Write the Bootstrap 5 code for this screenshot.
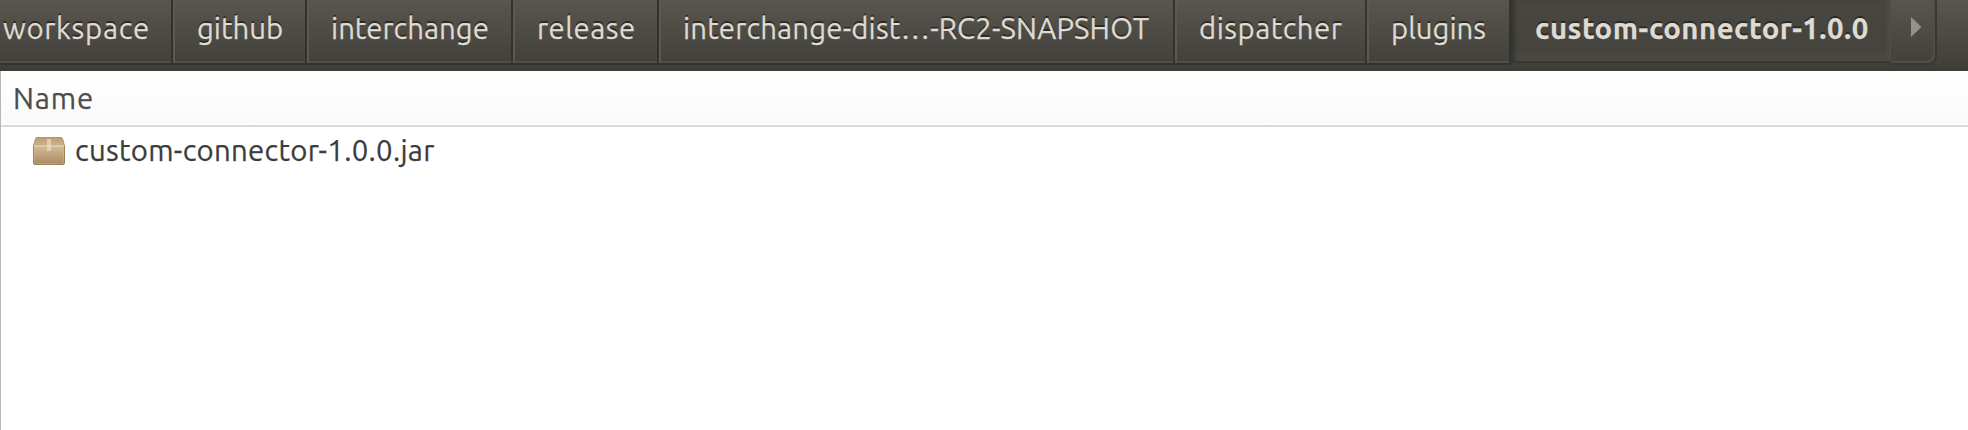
<!DOCTYPE html>
<html lang="en">
<head>
<meta charset="utf-8">
<title>custom-connector-1.0.0</title>
<link href="https://cdn.jsdelivr.net/npm/bootstrap@5.3.0/dist/css/bootstrap.min.css" rel="stylesheet">
<style>
body{font:29.33px/58px Ubuntu,"Noto Sans",sans-serif;color:#3c3c3c;background:#fff;overflow:hidden;-webkit-text-stroke:.25px}
.pathbar{height:71px;background:linear-gradient(#59564e 0,#43413c 61px,#3c3b37 71px);color:#dfdbd2;text-shadow:0 -2px 0 #2b2a27}
.crumb{height:65px;color:inherit;text-decoration:none;white-space:nowrap;padding-left:24px;border-right:2px solid #33322e;box-shadow:inset 0 -2px #33322e,inset 2px 0 #5b5953,inset 0 -4px #504e49}
.crumb:first-child{padding-left:3px;width:173px;letter-spacing:.7px;box-shadow:inset 0 -2px #33322e,inset 0 -4px #504e49}
.c-github{width:134px}
.c-inter{width:206px}
.c-release{width:146px;letter-spacing:.5px}
.c-dist{width:516px;letter-spacing:.16px}
.c-disp{width:192px;letter-spacing:.5px}
.c-plug{width:144px}
.c-current{width:380px;height:63px;padding-left:24px;font-weight:700;letter-spacing:.5px;background:linear-gradient(#484640,#45443e 50px,#4c4a45 61px);border-bottom:2px solid #383733;box-shadow:inset 6px 0 5px -3px #33322e,inset -5px 0 5px -2px #514f49;white-space:nowrap}
.c-next{width:46px;height:65px;border:solid #383733;border-width:0 2px 2px 0;border-radius:0 0 9px 0;box-shadow:inset -2px -2px #504e48}
.list-pane{height:359px;border-left:1px solid #b9b7b4}
.col-head{height:56px;line-height:56px;padding-left:12px;color:#4c4c4c;letter-spacing:.9px;background:linear-gradient(#fff,#fafafa 52px,#fff 54px);border-bottom:2px solid #dcd8d5}
.file-row{height:46px;line-height:46px;padding-left:32px;gap:10px;letter-spacing:.3px}
.file-row svg{margin-top:2px}
.file-row span{padding-top:2px}
</style>
<script src="https://cdn.jsdelivr.net/npm/bootstrap@5.3.0/dist/js/bootstrap.bundle.min.js"></script>
</head>
<body>
<nav class="pathbar d-flex align-items-start" aria-label="Location">
  <a class="crumb flex-shrink-0" href="#">workspace</a>
  <a class="crumb flex-shrink-0 c-github" href="#">github</a>
  <a class="crumb flex-shrink-0 c-inter" href="#">interchange</a>
  <a class="crumb flex-shrink-0 c-release" href="#">release</a>
  <a class="crumb flex-shrink-0 c-dist" href="#">interchange-dist…-RC2-SNAPSHOT</a>
  <a class="crumb flex-shrink-0 c-disp" href="#">dispatcher</a>
  <a class="crumb flex-shrink-0 c-plug" href="#">plugins</a>
  <span class="c-current flex-shrink-0" aria-current="page">custom-connector-1.0.0</span>
  <span class="c-next flex-shrink-0 d-flex"><svg width="44" height="56" aria-hidden="true"><path d="M20 17 30.500 27 20 37Z" fill="#96918b"/></svg></span>
</nav>
<main class="list-pane">
  <div class="col-head">Name</div>
  <div class="file-row d-flex align-items-center">
    <svg class="flex-shrink-0" width="32" height="28" viewBox="0 0 32 28" aria-hidden="true">
      <defs>
        <linearGradient id="front" x2="0" y2="1"><stop stop-color="#d5bc92"/><stop offset="1" stop-color="#a98a62"/></linearGradient>
        <linearGradient id="lid" x2="0" y2="1"><stop stop-color="#bd9f77"/><stop offset="1" stop-color="#cdb189"/></linearGradient>
      </defs>
      <path d="M4 .5h24q1 0 1.500 1L31.500 9H.5L2.500 1.500Q3 .5 4 .5Z" fill="url(#lid)" stroke="#b3936b"/>
      <path d="M.5 9h31v17q0 1.500-1.500 1.500H2Q.5 27.500.5 26Z" fill="url(#front)" stroke="#a08057"/>
      <path d="M1.500 10V25.500q0 1 1 1h27q1 0 1-1V10" fill="none" stroke="#d9c29b" stroke-opacity=".35"/>
      <path d="M1 9h30" stroke="#e9dac0" stroke-width="1.500"/>
      <path d="M14 2h4v12h-4Z" fill="#eee3d0" fill-opacity=".6"/>
    </svg>
    <span>custom-connector-1.0.0.jar</span>
  </div>
</main>
</body>
</html>
